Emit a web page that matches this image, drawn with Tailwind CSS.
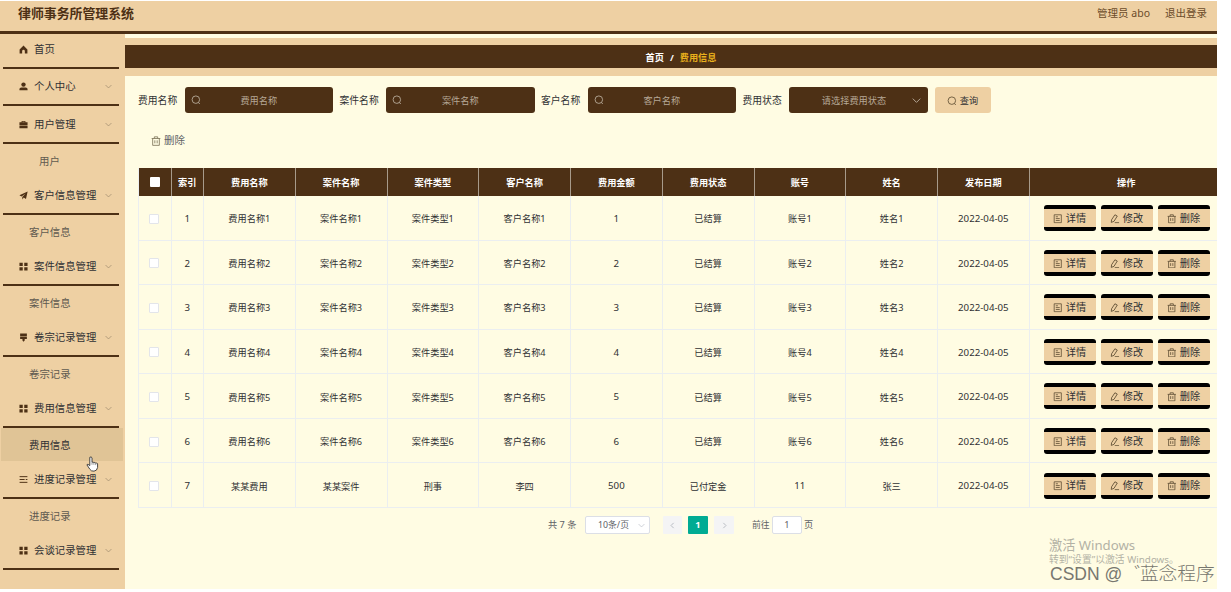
<!DOCTYPE html>
<html lang="zh-CN">
  <head>
    <meta charset="UTF-8" />
    <meta name="viewport" content="width=device-width, initial-scale=1.0" />
    <title>律师事务所管理系统</title>
    <script src="https://cdn.jsdelivr.net/npm/@tailwindcss/browser@4"></script>
  </head>
  <body
    class="bg-white pt-px font-['Noto_Sans','Noto_Sans_CJK_SC',sans-serif] text-[#303133] overflow-hidden"
  >
    <!-- icons -->
    <svg class="hidden">
      <symbol id="home" viewBox="0 0 12 12">
        <path fill="currentColor" d="M6 .6.800 6v5.400h3.400V8.200a1.800 1.800 0 0 1 3.600 0v3.200h3.400V6z" />
      </symbol>
      <symbol id="user" viewBox="0 0 12 12">
        <circle cx="6" cy="3.4" r="2.9" fill="currentColor" />
        <path fill="currentColor" d="M.6 11V9.400q0-2.200 2.600-2.200h5.600q2.600 0 2.600 2.200V11z" />
      </symbol>
      <symbol id="case" viewBox="0 0 12 12">
        <path fill="currentColor" d="M3.500 3V1.300h5V3h2.900v3.700H.6V3zm1 0h3v-.8h-3zM.6 7.300h10.800V11H.6z" />
      </symbol>
      <symbol id="plane" viewBox="0 0 12 12">
        <path fill="currentColor" d="M11.500.8 9.300 10.500 6.300 8.800 4.600 11.200 4.300 7.900 9 3.300 3.300 7.300.6 5.800z" />
      </symbol>
      <symbol id="grid" viewBox="0 0 12 12">
        <path fill="currentColor" d="M.6 1h4.400v4.200H.6zM7 1h4.400v4.200H7zM.6 7h4.400v4.200H.6zM7 7h4.400v4.200H7z" />
      </symbol>
      <symbol id="brush" viewBox="0 0 12 12">
        <path fill="currentColor" d="M1.500.8h9v3.800h-9zM1.500 5.200h9V8H7.600v2L6 11.500 4.600 10V8H1.500z" />
      </symbol>
      <symbol id="list" viewBox="0 0 12 12">
        <path fill="none" stroke="currentColor" stroke-width="1.300" d="M.8 2.200h10.400M.8 6h6.700M.8 9.800h10.400M9 6h2.200" />
      </symbol>
      <symbol id="down" viewBox="0 0 12 12">
        <path fill="none" stroke="currentColor" stroke-width="1.300" d="M1 3.500 6 8.500l5-5" />
      </symbol>
      <symbol id="left" viewBox="0 0 12 12">
        <path fill="none" stroke="currentColor" stroke-width="1.600" d="M8 1.500 3.500 6 8 10.500" />
      </symbol>
      <symbol id="right" viewBox="0 0 12 12">
        <path fill="none" stroke="currentColor" stroke-width="1.600" d="M4 1.500 8.500 6 4 10.500" />
      </symbol>
      <symbol id="search" viewBox="0 0 12 12">
        <circle cx="5.800" cy="5.600" r="4.500" fill="none" stroke="currentColor" stroke-width="1.100" />
        <path fill="none" stroke="currentColor" stroke-width="1.100" d="m8.600 8.800 2 2" />
      </symbol>
      <symbol id="trash" viewBox="0 0 12 12">
        <path fill="none" stroke="currentColor" d="M.8 3h10.400M2 3v8.200h8V3M4 2.800V1h4v1.800M4.600 5.200v3.600M7.400 5.200v3.600" />
      </symbol>
      <symbol id="doc" viewBox="0 0 12 12">
        <path fill="none" stroke="currentColor" d="M1.500 1h9v10h-9zM3.500 3.500h2.700M3.500 5.800h5M3.500 8.200h5" />
      </symbol>
      <symbol id="edit" viewBox="0 0 12 12">
        <path fill="none" stroke="currentColor" stroke-width="1.100" d="M6.200 1 9.200 2.600 5 9.300 1.600 10.600 2 7.300zM6 11h5.500" />
      </symbol>
    </svg>

    <div class="relative w-[1217px] h-[588px] bg-[#fffce3] overflow-hidden flex flex-col">
      <header
        class="h-[33px] shrink-0 bg-[#eed0a3] border-b-[3px] border-[#4d3015] flex items-center justify-between pl-[18px] pr-[10px] pb-[5px]"
      >
        <h1 class="text-[12.900px] font-bold text-[#4d3015]">律师事务所管理系统</h1>
        <div class="flex gap-[15px] text-[10.500px] text-[#6b4c2a]">
          <span>管理员 abo</span>
          <span>退出登录</span>
        </div>
      </header>

      <div class="flex flex-1 min-h-0">
        <aside id="menu" class="w-[125px] shrink-0 bg-[#eed0a3]"></aside>

        <main class="flex-1 min-w-0">
          <div class="mt-1 h-[38px] bg-[#eed0a3] pt-[7px] pb-2">
            <div
              class="h-full bg-[#4d3015] text-white text-[9.200px] font-bold flex items-center justify-center gap-[6px] pl-[20px] pt-[2px]"
            >
              <span>首页</span><span>/</span><span class="text-[#e9b01c]">费用信息</span>
            </div>
          </div>

          <div class="flex items-center pl-[13px] pt-[11px] text-[9.800px]">
            <label class="w-[46.500px] pt-[2px]">费用名称</label>
            <div class="w-[148.500px] h-[26px] rounded-[3px] bg-[#4d3015] text-[#b5a796] text-[9.200px] flex items-center pl-[6px]">
              <svg class="size-[10px]"><use href="#search" /></svg>
              <span class="flex-1 text-center pr-[16px] pt-px">费用名称</span>
            </div>
            <label class="w-[46.500px] ml-[6.500px] pt-[2px]">案件名称</label>
            <div class="w-[148.500px] h-[26px] rounded-[3px] bg-[#4d3015] text-[#b5a796] text-[9.200px] flex items-center pl-[6px]">
              <svg class="size-[10px]"><use href="#search" /></svg>
              <span class="flex-1 text-center pr-[16px] pt-px">案件名称</span>
            </div>
            <label class="w-[46.500px] ml-[6.500px] pt-[2px]">客户名称</label>
            <div class="w-[148.500px] h-[26px] rounded-[3px] bg-[#4d3015] text-[#b5a796] text-[9.200px] flex items-center pl-[6px]">
              <svg class="size-[10px]"><use href="#search" /></svg>
              <span class="flex-1 text-center pr-[16px] pt-px">客户名称</span>
            </div>
            <label class="w-[46.500px] ml-[6.500px] pt-[2px]">费用状态</label>
            <div class="w-[139px] h-[26px] rounded-[3px] bg-[#4d3015] text-[#b5a796] text-[9.200px] flex items-center pr-[7px]">
              <span class="flex-1 text-center pl-[7px] pt-px">请选择费用状态</span>
              <svg class="size-[9px]"><use href="#down" /></svg>
            </div>
            <button class="ml-[6.500px] w-[56px] h-[26px] rounded-[3px] bg-[#eed0a3] text-[9.200px] flex items-center justify-center gap-[3px] pt-px">
              <svg class="size-[10px] text-[#6b5a3c]"><use href="#search" /></svg>查询
            </button>
          </div>

          <button class="ml-[26px] mt-[20px] h-[15px] flex items-center gap-[3px] text-[10.500px] text-[#606266]">
            <svg class="size-[10px] text-[#7d7458]"><use href="#trash" /></svg>删除
          </button>

          <div id="table" class="ml-[13px] mt-5 w-[1085px] border-l border-[#ebeef0] text-[9.200px]"></div>

          <div class="ml-[423px] mt-[8px] h-[19px] flex items-center text-[9.200px] text-[#606266]">
            <span class="w-[37px] whitespace-nowrap">共 7 条</span>
            <div class="w-[65px] h-[18px] bg-white border border-[#dcdfe6] rounded-[2px] flex items-center justify-between pl-[12px] pr-[4px]">
              <span class="text-[8.800px]">10条/页</span>
              <svg class="size-[7px] text-[#c0c4cc]"><use href="#down" /></svg>
            </div>
            <span class="ml-[13px] w-[19px] h-[18px] rounded-[1px] bg-[#f4f4f5] text-[#b4b8c0] flex items-center justify-center">
              <svg class="size-[7px]"><use href="#left" /></svg>
            </span>
            <span class="ml-[6px] w-[20px] h-[18px] rounded-[1px] bg-[#00ab93] text-white font-bold flex items-center justify-center">1</span>
            <span class="ml-[6px] w-[20px] h-[18px] rounded-[1px] bg-[#f4f4f5] text-[#b4b8c0] flex items-center justify-center">
              <svg class="size-[7px]"><use href="#right" /></svg>
            </span>
            <span class="ml-[18px] w-[20px] text-[8.800px]">前往</span>
            <span class="w-[30px] h-[18px] bg-white border border-[#dcdfe6] rounded-[2px] flex items-center justify-center">1</span>
            <span class="ml-[2px]">页</span>
          </div>
        </main>
      </div>

      <!-- watermarks over the page -->
      <div class="absolute left-[1049px] top-[535px] text-[#b3b2a5] whitespace-nowrap">
        <p class="text-[13.200px] leading-[18px]">激活 Windows</p>
        <p class="text-[9.800px] leading-[12px]">转到“设置”以激活 Windows。</p>
      </div>
      <div
        class="absolute left-[1050px] top-[562px] text-[18.700px] leading-[22px] text-[#77776f] whitespace-nowrap font-['Liberation_Sans','Noto_Sans_CJK_SC',sans-serif] font-light"
      >
        <span class="text-[17.500px]">CSDN @</span><span class="ml-[12px]">゛</span><span class="-ml-[13px]">蓝念程序</span>
      </div>

      <!-- mouse pointer -->
      <svg class="absolute left-[86px] top-[455px] w-[13px] h-[16px]" viewBox="0 0 13 16">
        <path
          fill="#fff"
          stroke="#333"
          stroke-width=".9"
          stroke-linejoin="round"
          d="M3.800 1.300q1.500-1 2.200.5v4.500q1-.8 1.900.3 1-.6 1.700.4 1.400-.4 2 .8v3.700q-.5 3.300-3.600 3.700-3 .2-4.200-2L.9 8.800q.5-1.500 2.900.8z"
        />
        <path stroke="#555" stroke-width=".6" d="M6 6.500v2.300M7.900 6.800v2M9.700 7.300v1.800" />
      </svg>
    </div>

    <script>
      const menu = [
        { icon: "home", name: "首页" },
        { icon: "user", name: "个人中心", arrow: true },
        { icon: "case", name: "用户管理", arrow: true, child: "用户" },
        { icon: "plane", name: "客户信息管理", arrow: true, child: "客户信息" },
        { icon: "grid", name: "案件信息管理", arrow: true, child: "案件信息" },
        { icon: "brush", name: "卷宗记录管理", arrow: true, child: "卷宗记录" },
        { icon: "grid", name: "费用信息管理", arrow: true, child: "费用信息", active: true },
        { icon: "list", name: "进度记录管理", arrow: true, child: "进度记录" },
        { icon: "grid", name: "会谈记录管理", arrow: true },
      ];

      document.getElementById("menu").innerHTML = menu
        .map((m, i) => {
          // the first entry sits closer to the header
          const height = i === 0 ? "h-[34.500px] pb-px" : "h-[37.500px] pt-px";
          let html = `<div class="${height} ml-[3px] mr-[6px] pl-[16px] pr-[6px] border-b-2 border-[#4d3015] flex items-center text-[10.400px]">
            <svg class="size-[9px] mr-[6px] text-[#4d3015]"><use href="#${m.icon}" /></svg>
            <span class="flex-1 whitespace-nowrap pt-px">${m.name}</span>
            ${m.arrow ? '<svg class="size-[7px] mr-px text-[#a18d70]"><use href="#down" /></svg>' : ""}
          </div>`;
          if (m.child) {
            const pad = m.child.length === 2 ? "pl-[38px]" : "pl-[28px]";
            const color = m.active ? "bg-[#e0c496] text-[#303133]" : "text-[#5f5a50]";
            html += `<div class="h-[33.500px] ml-px mr-[2px] ${pad} ${color} pt-[4px] flex items-center text-[10.400px]">${m.child}</div>`;
          }
          return html;
        })
        .join("");

      const heads = ["索引", "费用名称", "案件名称", "案件类型", "客户名称", "费用金额", "费用状态", "账号", "姓名", "发布日期", "操作"];
      const rows = [];
      for (let i = 1; i <= 6; i++) {
        rows.push([i, "费用名称" + i, "案件名称" + i, "案件类型" + i, "客户名称" + i, i, "已结算", "账号" + i, "姓名" + i, "2022-04-05"]);
      }
      rows.push([7, "某某费用", "某某案件", "刑事", "李四", 500, "已付定金", 11, "张三", "2022-04-05"]);

      const rowGrid = "grid grid-cols-[32.500px_32.500px_repeat(9,91.750px)_194px]";
      const buttons = [
        ["doc", "详情"],
        ["edit", "修改"],
        ["trash", "删除"],
      ]
        .map(
          ([icon, name]) => `<button class="w-[52px] h-[26px] rounded-[3px] border-y-4 border-black bg-[#eed0a3] text-[10.200px] flex items-center justify-center gap-[3px] pt-px">
            <svg class="size-[9.500px] text-[#5c4c33]"><use href="#${icon}" /></svg>${name}</button>`
        )
        .join("");

      let html = `<div class="${rowGrid} h-[28px] bg-[#4d3015] text-white font-bold">
        <div class="border-r border-[#a79a8a] flex items-center justify-center"><i class="size-[10px] bg-white rounded-[1px]"></i></div>`;
      heads.forEach((h) => {
        html += `<div class="border-r border-[#a79a8a] flex items-center justify-center pt-px">${h}</div>`;
      });
      html += "</div>";

      rows.forEach((r) => {
        html += `<div class="${rowGrid} h-[44.550px] border-b border-[#ebeef0]">
          <div class="border-r border-[#ebeef0] flex items-center justify-center pr-[2px] pt-[2px]"><i class="size-[10px] bg-white border border-[#e3e5ea] rounded-[1px]"></i></div>`;
        r.forEach((c) => {
          const size = /^[\d-]+$/.test(c) ? "text-[9.700px]" : "";
          html += `<div class="border-r border-[#ebeef0] flex items-center justify-center pt-[3px] ${size}">${c}</div>`;
        });
        html += `<div class="flex items-center gap-[5px] pl-[14px] pt-px">${buttons}</div></div>`;
      });
      document.getElementById("table").innerHTML = html;
    </script>
  </body>
</html>
